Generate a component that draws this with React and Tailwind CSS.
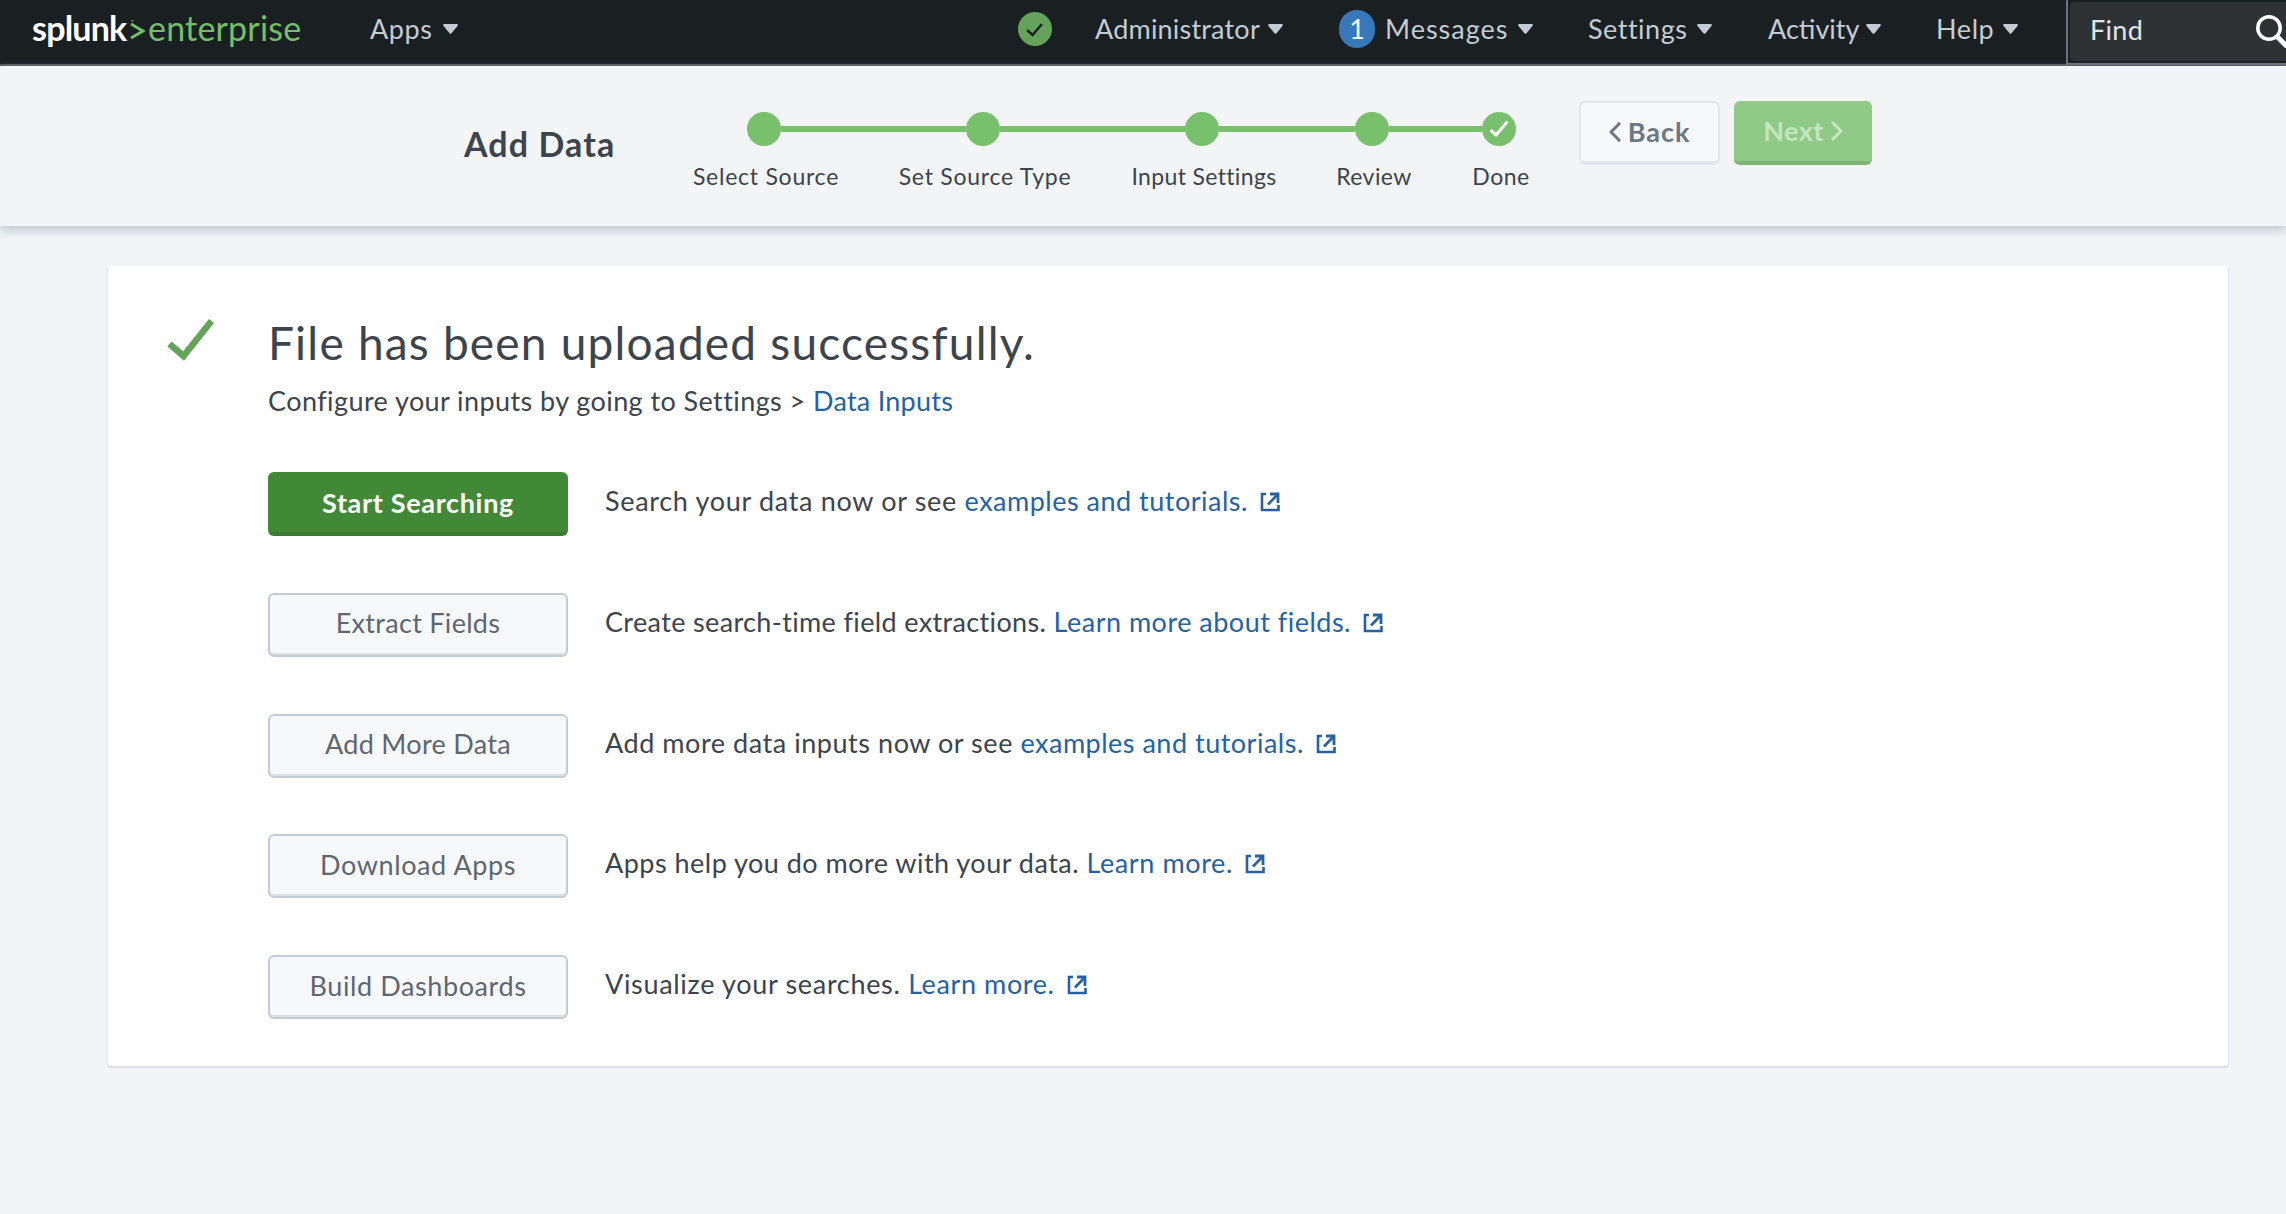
import React from "react";

function Caret({ className = "" }) {
  return (
    <svg className={`h-[10px] w-[15px] shrink-0 ${className}`} viewBox="0 0 15 10">
      <path d="M1.5 0h12c1.2 0 1.8 1 1 2L8.5 9.3c-.6.7-1.4.7-2 0L.5 2C-.3 1 .3 0 1.5 0z" fill="#c3cbd4" />
    </svg>
  );
}

function NavItem({ label, width, tracking }) {
  return (
    <div className="flex items-center whitespace-nowrap">
      <span className={`${width} ${tracking}`}>{label}</span>
      <Caret />
    </div>
  );
}

function External() {
  return (
    <svg className="ml-[12px] inline-block h-5 w-5 align-[-1px]" viewBox="0 0 20 20" fill="none" stroke="#2662a1">
      <path d="M6 2H2V18H18.5V13" strokeWidth="2.6" />
      <path d="M10 2H18V11" strokeWidth="2.8" />
      <path d="M18 2L8 12.5" strokeWidth="2.6" />
    </svg>
  );
}

const STEPS = [
  { label: "Select Source", w: "w-[219px]", l: "tracking-[0.75px]" },
  { label: "Set Source Type", w: "w-[219px]", l: "tracking-[0.75px]" },
  { label: "Input Settings", w: "w-[170px]", l: "tracking-[0.35px]" },
  { label: "Review", w: "w-[127px]", l: "tracking-[0.45px]" },
  { label: "Done", w: "w-[34px]", l: "tracking-[0.5px]", done: true },
];

const ROWS = [
  { button: "Start Searching", primary: true, bt: "tracking-[0.68px]", text: "Search your data now or see", link: "examples and tutorials.", t: "tracking-[0.68px]", lt: "tracking-[0.5px]" },
  { button: "Extract Fields", bt: "tracking-[0.3px]", text: "Create search-time field extractions.", link: "Learn more about fields.", t: "tracking-[0.36px]", lt: "tracking-[0.49px]" },
  { button: "Add More Data", bt: "tracking-[0.3px]", text: "Add more data inputs now or see", link: "examples and tutorials.", t: "tracking-[0.55px]", lt: "tracking-[0.5px]" },
  { button: "Download Apps", bt: "tracking-[0.6px]", text: "Apps help you do more with your data.", link: "Learn more.", t: "tracking-[0.48px]", lt: "tracking-[0.6px]" },
  { button: "Build Dashboards", bt: "tracking-[0.6px]", text: "Visualize your searches.", link: "Learn more.", t: "tracking-[0.68px]", lt: "tracking-[0.6px]" },
];

export default function App() {
  return (
    <div className="h-[1214px] w-[2286px] overflow-hidden bg-[#f2f4f5] font-['Lato',sans-serif] text-[27px] leading-[40px] text-[#3c444d]">
      <header className="flex h-[66px] items-start border-b-2 border-[#4f575e] bg-[#1a1f22] text-[#c3cbd4]">
        <div className="flex h-[55px] w-[370px] items-center pl-[32px] text-[34px] whitespace-nowrap">
          <span className="w-[98px] font-bold tracking-[-0.8px] text-white">splunk</span>
          <svg className="mt-[5px] mr-[3px] h-[20px] w-[15px]" viewBox="0 0 15 20" fill="none" stroke="#74bf68" strokeWidth="3">
            <path d="M1 4L13 11L1 18" />
            <path d="M1 .5h3" strokeWidth="2" opacity=".6" />
          </svg>
          <span className="tracking-[0.2px] text-[#74bf68]">enterprise</span>
        </div>
        <div className="flex h-[58px] w-[648px] items-center"><NavItem label="Apps" width="w-[73px]" tracking="tracking-[0.6px]" /></div>
        <div className="flex h-[58px] w-[1048px] items-center">
          <svg className="mr-[43px] h-[34px] w-[34px]" viewBox="0 0 34 34">
            <circle cx="17" cy="17" r="17" fill="#65a35b" />
            <path d="M9 18L14.5 23L24 12" fill="none" stroke="#1a1f22" strokeWidth="2.5" />
          </svg>
          <div className="w-[244px]"><NavItem label="Administrator" width="w-[173px]" tracking="tracking-[0.2px]" /></div>
          <div className="mr-[10px] flex h-[38px] w-[36px] items-center justify-center rounded-full bg-[#3678b8] text-white">1</div>
          <div className="w-[203px]"><NavItem label="Messages" width="w-[133px]" tracking="tracking-[1px]" /></div>
          <div className="w-[180px]"><NavItem label="Settings" width="w-[109px]" tracking="tracking-[0.5px]" /></div>
          <div className="w-[168px]"><NavItem label="Activity" width="w-[98px]" tracking="tracking-[0px]" /></div>
          <NavItem label="Help" width="w-[67px]" tracking="tracking-[0.6px]" />
        </div>
        <div className="flex h-[65px] w-[220px] border-b-2 border-l-2 border-[#6b7580] p-[2px] pr-0">
          <div className="flex h-[59px] grow items-center justify-between rounded-l-[4px] bg-[#2e3234] pl-[20px] text-[#e1e6eb]">
            <span className="pb-[4px] tracking-[0.3px]">Find</span>
            <svg className="h-[33px] w-[30px]" viewBox="0 0 30 33" fill="none" stroke="white">
              <circle cx="13" cy="13" r="11.2" strokeWidth="3.5" />
              <path d="M20 20.5L31 31.5" strokeWidth="5" />
            </svg>
          </div>
        </div>
      </header>

      <section className="flex h-[160px] items-start shadow-[0_5px_9px_#c3cbd4]">
        <h1 className="mt-[58px] box-content w-[283px] pl-[464px] text-[34px] font-bold tracking-[1.1px] whitespace-nowrap">Add Data</h1>
        <div className="mt-[46px] flex w-[832px]">
          {STEPS.map((s) => (
            <div key={s.label} className={`${s.w} h-[90px] shrink-0`}>
              <div className="flex h-[34px] items-center">
                <div className="flex h-[34px] w-[34px] shrink-0 items-center justify-center rounded-full bg-[#78c06b]">
                  {s.done && (
                    <svg className="h-[18px] w-[20px]" viewBox="0 0 20 18" fill="none" stroke="white" strokeWidth="3.2">
                      <path d="M1.5 10L7 15L18.5 1.5" />
                    </svg>
                  )}
                </div>
                {!s.done && <div className="h-[6px] grow bg-[#78c06b]" />}
              </div>
              <div className="mt-[12px] flex w-[34px] justify-center text-[23px] leading-[36px] whitespace-nowrap">
                <span className={`${s.l} ml-[4px]`}>{s.label}</span>
              </div>
            </div>
          ))}
        </div>
        <button className="mt-[35px] flex h-[64px] w-[141px] items-center justify-center gap-[7px] rounded-[6px] border-2 border-b-4 border-[#e1e6eb] bg-[#f7f8fa] font-bold text-[#6b7785]">
          <svg className="h-[20px] w-[12px]" viewBox="0 0 12 20" fill="none" stroke="currentColor" strokeWidth="3"><path d="M11 1L2 10L11 19" /></svg>
          <span className="pb-[1px] tracking-[1px]">Back</span>
        </button>
        <button className="mt-[35px] ml-[14px] flex h-[64px] w-[138px] items-center justify-center gap-[7px] rounded-[6px] border-b-4 border-[#80b476] bg-[#8fcb86] font-bold text-[#c6e6c1]">
          <span className="tracking-[0.4px]">Next</span>
          <svg className="h-[20px] w-[12px]" viewBox="0 0 12 20" fill="none" stroke="currentColor" strokeWidth="3"><path d="M1 1L10 10L1 19" /></svg>
        </button>
      </section>

      <main className="mt-[40px] ml-[108px] h-[800px] w-[2120px] bg-white pl-[160px] shadow-[0_1px_2px_#c3cbd4]">
        <div className="flex">
          <svg className="mt-[53px] mr-[54px] -ml-[101px] h-[42px] w-[47px]" viewBox="0 0 47 42" fill="none" stroke="#65a35b" strokeWidth="6.5">
            <path d="M2.5 25L16.5 37L44.5 2" />
          </svg>
          <h2 className="mt-[47px] text-[46px] leading-[60px] tracking-[1.2px] whitespace-nowrap">File has been uploaded successfully.</h2>
        </div>
        <p className="mt-[8px] whitespace-nowrap">
          <span className="tracking-[0.42px]">Configure your inputs by going to Settings &gt; </span>
          <a className="tracking-[0.25px] text-[#2662a1]">Data Inputs</a>
        </p>
        <div className="mt-[51px] flex flex-col gap-[56.75px]">
          {ROWS.map((r) => (
            <div key={r.button} className="flex h-[64px] items-start">
              <button className={`mr-[37px] h-[64px] w-[300px] rounded-[6px] ${r.bt} ${r.primary ? "border-b-4 border-[#3a7a33] bg-[#428937] pt-[1px] font-bold text-white" : "border-2 border-[#c3cbd4] bg-[#f7f8fa] pb-[3px] text-[#5c6773] shadow-[inset_0_-2px_0_#dde0e3]"}`}>{r.button}</button>
              <p className="mt-[9px] whitespace-nowrap">
                <span className={r.t}>{r.text} </span>
                <a className={`text-[#2662a1] ${r.lt}`}>{r.link}</a>
                <External />
              </p>
            </div>
          ))}
        </div>
      </main>
    </div>
  );
}
